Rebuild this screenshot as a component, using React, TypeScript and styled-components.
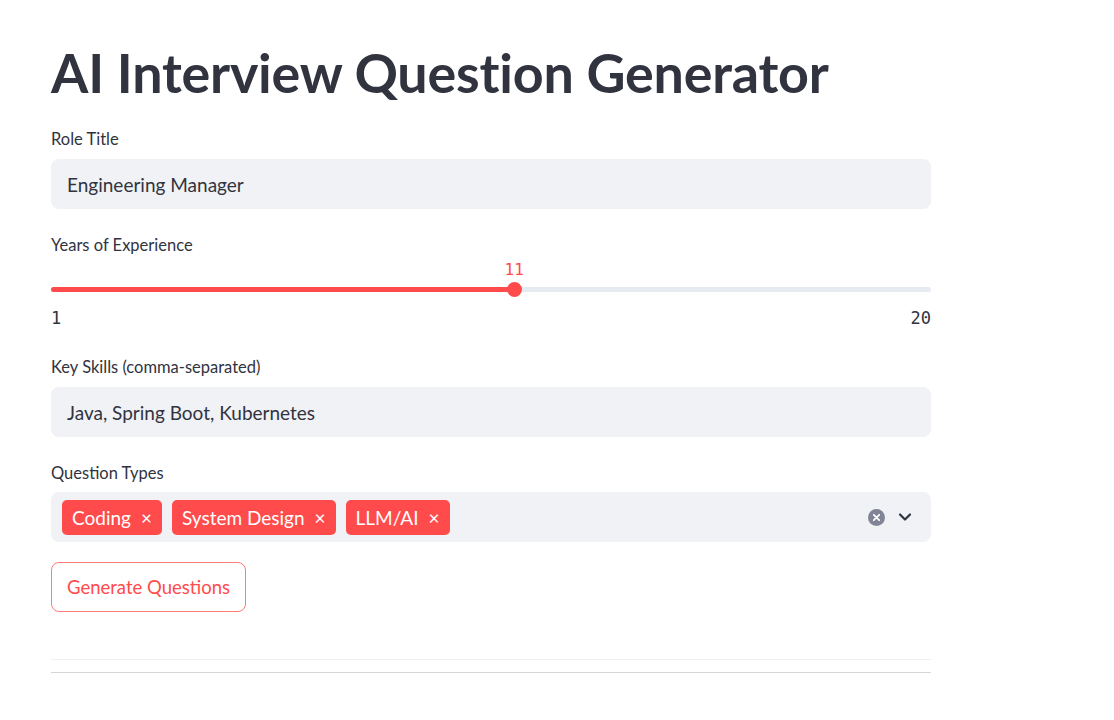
import React from "react";
import styled, { createGlobalStyle } from "styled-components";

const GlobalStyle = createGlobalStyle`
  html, body { margin: 0; padding: 0; background: #ffffff; }
  body { font-family: Lato, "Noto Sans", sans-serif; color: #31333f; }
  * { box-sizing: border-box; }
`;

const Main = styled.main`
  width: 880px;
  margin-left: 51px;
  padding-top: 38px;
  display: flex;
  flex-direction: column;
`;

const Title = styled.h1`
  margin: 0;
  font-family: Lato, sans-serif;
  font-weight: 700;
  font-size: 53.8px;
  line-height: 68px;
  color: #31333f;
  letter-spacing: -0.2px;
`;

const Field = styled.div<{ $mt: number }>`
  margin-top: ${(p) => p.$mt}px;
  display: flex;
  flex-direction: column;
`;

const Label = styled.label`
  font-size: 16.5px;
  line-height: 22px;
  color: #31333f;
  height: 22px;
`;

const InputBox = styled.div`
  margin-top: 9px;
  height: 50px;
  border-radius: 8px;
  background: #f0f2f6;
  display: flex;
  align-items: center;
  padding: 0 16px;
  font-size: 19px;
  color: #31333f;
`;

const SliderWrap = styled.div`
  position: relative;
  height: 104px;
  margin-top: -4px;
`;

const ValueLabel = styled.div`
  position: absolute;
  top: 8px;
  transform: translateX(-50%);
  font-family: "DejaVu Sans Mono", "Liberation Mono", monospace;
  font-size: 16px;
  color: #ff4b4b;
`;

const Track = styled.div`
  position: absolute;
  left: 0;
  right: 0;
  top: 35px;
  height: 5px;
  border-radius: 3px;
  background: #e6eaf1;
`;

const Fill = styled.div`
  position: absolute;
  left: 0;
  top: 0;
  bottom: 0;
  border-radius: 3px;
  background: #ff4b4b;
`;

const Thumb = styled.div`
  position: absolute;
  top: 30px;
  width: 15px;
  height: 15px;
  margin-left: -7.5px;
  border-radius: 50%;
  background: #ff4b4b;
`;

const Ticks = styled.div`
  position: absolute;
  left: 0;
  right: 0;
  top: 56px;
  display: flex;
  justify-content: space-between;
  font-family: "DejaVu Sans Mono", "Liberation Mono", monospace;
  font-size: 17px;
  color: #31333f;
`;

const Multi = styled.div`
  margin-top: 8px;
  height: 50px;
  border-radius: 8px;
  background: #f0f2f6;
  display: flex;
  align-items: center;
  padding: 0 18px 0 11px;
`;

const Tags = styled.div`
  flex: 1;
  display: flex;
  gap: 10px;
`;

const Tag = styled.span`
  height: 35px;
  border-radius: 5px;
  background: #ff4b4b;
  color: #ffffff;
  display: inline-flex;
  align-items: center;
  padding: 0 10px 0 10px;
  font-size: 19px;
  gap: 10px;
`;

const TagX = styled.span`
  font-size: 19px;
  line-height: 1;
`;

const Controls = styled.div`
  display: flex;
  align-items: center;
  gap: 12px;
`;

const Button = styled.button`
  margin-top: 20px;
  align-self: flex-start;
  height: 50px;
  padding: 0 15px;
  border: 1px solid #ff7a7a;
  border-radius: 8px;
  background: #ffffff;
  color: #ff4b4b;
  font-family: Lato, sans-serif;
  font-size: 18.5px;
`;

const Rule = styled.hr<{ $c: string; $mt: number }>`
  margin: ${(p) => p.$mt}px 0 0 0;
  border: none;
  border-top: 1px solid ${(p) => p.$c};
  width: 100%;
`;

const ClearIcon = () => (
  <svg width="17" height="17" viewBox="0 0 17 17">
    <circle cx="8.5" cy="8.5" r="8.5" fill="#808495" />
    <path d="M5.8 5.8 L11.2 11.2 M11.2 5.8 L5.8 11.2" stroke="#fff" strokeWidth="1.8" strokeLinecap="round" />
  </svg>
);

const Chevron = () => (
  <svg width="16" height="16" viewBox="0 0 16 16">
    <path d="M3 5.5 L8 10.5 L13 5.5" fill="none" stroke="#31333f" strokeWidth="2.2" strokeLinecap="round" strokeLinejoin="round" />
  </svg>
);

export default function App() {
  const min = 1;
  const max = 20;
  const value = 11;
  const pct = ((value - min) / (max - min)) * 100;
  return (
    <>
      <GlobalStyle />
      <Main>
        <Title>AI Interview Question Generator</Title>
        <Field $mt={22}>
          <Label>Role Title</Label>
          <InputBox>Engineering Manager</InputBox>
        </Field>
        <Field $mt={25}>
          <Label>Years of Experience</Label>
          <SliderWrap>
            <ValueLabel style={{ left: `${pct}%` }}>{value}</ValueLabel>
            <Track>
              <Fill style={{ width: `${pct}%` }} />
            </Track>
            <Thumb style={{ left: `${pct}%` }} />
            <Ticks>
              <span>{min}</span>
              <span>{max}</span>
            </Ticks>
          </SliderWrap>
        </Field>
        <Field $mt={0}>
          <Label>Key Skills (comma-separated)</Label>
          <InputBox>Java, Spring Boot, Kubernetes</InputBox>
        </Field>
        <Field $mt={25}>
          <Label>Question Types</Label>
          <Multi>
            <Tags>
              <Tag>Coding<TagX>×</TagX></Tag>
              <Tag>System Design<TagX>×</TagX></Tag>
              <Tag>LLM/AI<TagX>×</TagX></Tag>
            </Tags>
            <Controls>
              <ClearIcon />
              <Chevron />
            </Controls>
          </Multi>
        </Field>
        <Button>Generate Questions</Button>
        <Rule $c="#f0f0f0" $mt={47} />
        <Rule $c="#d6d6d8" $mt={12} />
      </Main>
    </>
  );
}
